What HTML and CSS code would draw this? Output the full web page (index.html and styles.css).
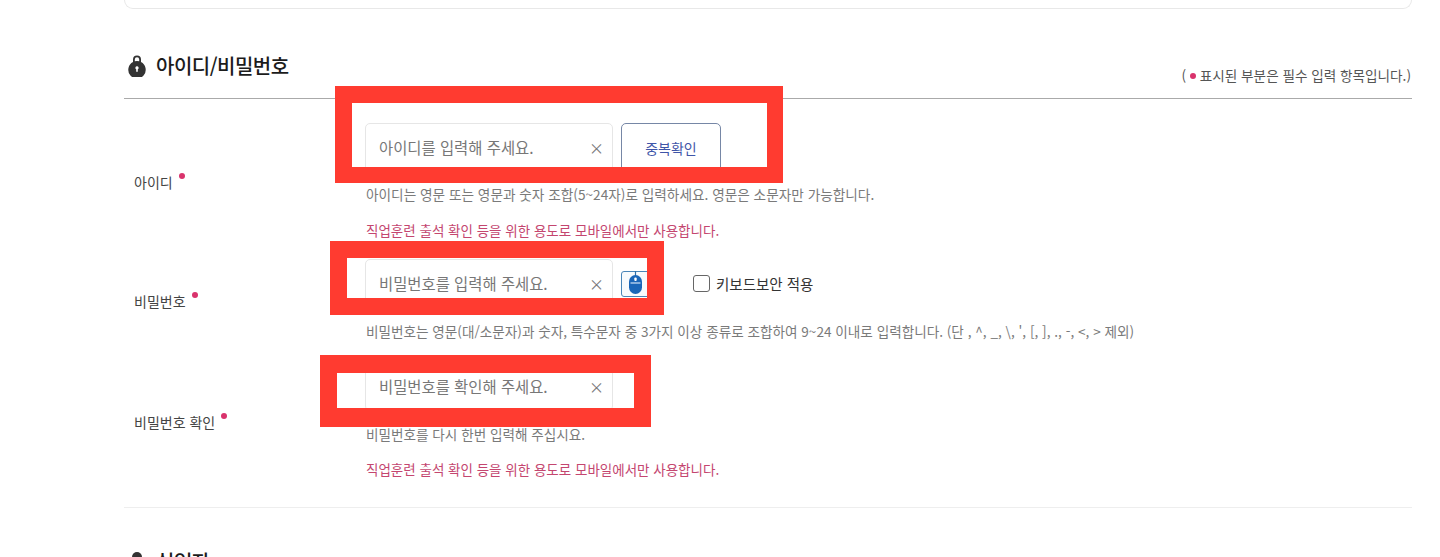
FILE: index.html
```html
<!DOCTYPE html>
<html lang="ko">
<head>
<meta charset="utf-8">
<title>아이디/비밀번호</title>
<link rel="stylesheet" href="styles.css">
</head>
<body>
<div class="page">
  <div class="top-card"></div>
  <section class="section">
    <header class="section-head">
      <h2 class="section-title">
        <svg class="lock" viewBox="0 0 18 22" aria-hidden="true"><path class="lock-body" fill-rule="evenodd" d="M5 7V4.4a4 4 0 0 1 8 0V7a8.7 8.7 0 1 1-8 0ZM6.8 6.2a8.7 8.7 0 0 1 4.4 0V4.4a2.2 2.2 0 0 0-4.4 0ZM9 11.2a1.6 1.6 0 0 0-.8 3v2.6h1.6v-2.6a1.6 1.6 0 0 0-.8-3Z"/></svg>
        아이디/비밀번호
      </h2>
      <p class="required-note">( <span class="note-dot"></span> 표시된 부분은 필수 입력 항목입니다.)</p>
    </header>

    <div class="form-row row-id">
      <div class="field-label">아이디<span class="req"></span></div>
      <div class="field-body">
        <div class="control-line">
          <div class="input-box"><input class="text-input" type="text" placeholder="아이디를 입력해 주세요."><span class="clear">×</span></div>
          <button class="check-btn" type="button">중복확인</button>
        </div>
        <p class="help">아이디는 영문 또는 영문과 숫자 조합(5~24자)로 입력하세요. 영문은 소문자만 가능합니다.</p>
        <p class="help warn">직업훈련 출석 확인 등을 위한 용도로 모바일에서만 사용합니다.</p>
      </div>
    </div>

    <div class="form-row row-pw">
      <div class="field-label">비밀번호<span class="req"></span></div>
      <div class="field-body">
        <div class="control-line">
          <div class="input-box"><input class="text-input" type="text" placeholder="비밀번호를 입력해 주세요."><span class="clear">×</span></div>
          <span class="mouse-btn">
            <svg viewBox="0 0 29 26" width="29" height="26" aria-hidden="true"><path d="M13.5 0v5" stroke="#2d6fa8" stroke-width="1.2" fill="none"/><rect x="7" y="4" width="13" height="19" rx="6.5" fill="#1a66b8"/><rect x="12.3" y="6.5" width="2.4" height="3.6" rx="1" fill="#fff"/><path d="M8.5 12h10" stroke="#cfe2f5" stroke-width="1.2"/></svg>
          </span>
          <label class="secure-check"><span class="check-box"></span>키보드보안 적용</label>
        </div>
        <p class="help help-loose">비밀번호는 영문(대/소문자)과 숫자, 특수문자 중 3가지 이상 종류로 조합하여 9~24 이내로 입력합니다. (단 , ^, _, \, ', [, ], ., -, &lt;, &gt; 제외)</p>
      </div>
    </div>

    <div class="form-row row-confirm">
      <div class="field-label">비밀번호 확인<span class="req"></span></div>
      <div class="field-body">
        <div class="control-line">
          <div class="input-box"><input class="text-input" type="text" placeholder="비밀번호를 확인해 주세요."><span class="clear">×</span></div>
        </div>
        <p class="help help-loose">비밀번호를 다시 한번 입력해 주십시요.</p>
        <p class="help warn">직업훈련 출석 확인 등을 위한 용도로 모바일에서만 사용합니다.</p>
      </div>
    </div>
  </section>

  <section class="section next-section">
    <h2 class="section-title">
      <svg class="lock" viewBox="0 0 18 22" aria-hidden="true"><circle class="lock-body" cx="9" cy="6" r="5"/><path class="lock-body" d="M0 22c0-6 4-9 9-9s9 3 9 9Z"/></svg>
      실업자
    </h2>
  </section>
</div>

<div class="redact redact-1"></div>
<div class="redact redact-2"></div>
<div class="redact redact-3"></div>
</body>
</html>
```
FILE: styles.css
```css
* { box-sizing: border-box; }
html, body { margin: 0; padding: 0; height: 557px; overflow: hidden; background: #fff; }
body {
  position: relative;
  font-family: "Noto Sans CJK KR", "Noto Sans", sans-serif;
  color: #333;
}
.page { margin: 0 28px 0 124px; }
.top-card {
  height: 9px;
  border: 1px solid #e8e8e8;
  border-top: 0;
  border-radius: 0 0 10px 10px;
}
.section-head {
  display: flex;
  justify-content: space-between;
  align-items: flex-end;
  height: 90px;
  padding-bottom: 13px;
  border-bottom: 1px solid #aaa;
}
.section-title {
  display: flex;
  align-items: center;
  gap: 10px;
  margin: 0 0 4px;
  padding-left: 4px;
  font-size: 20px;
  line-height: 30px;
  font-weight: 500;
  letter-spacing: -0.5px;
  color: #1c1c1c;
}
.lock { width: 18px; height: 22px; flex: none; }
.lock-body { fill: #333; }
.required-note {
  margin: 0;
  padding-right: 1px;
  font-size: 13.6px;
  line-height: 20px;
  color: #555;
}
.note-dot {
  display: inline-block;
  width: 6px;
  height: 6px;
  border-radius: 50%;
  background: #d9336c;
  vertical-align: 2px;
}
.form-row { display: flex; align-items: center; }
.row-id { padding: 24px 0 0; }
.row-pw { padding: 19px 0 0; }
.row-confirm { padding: 21px 0 28px; border-bottom: 1px solid #eee; }
.field-label {
  flex: none;
  width: 241px;
  padding: 2px 0 0 10px;
  font-size: 14px;
  line-height: 20px;
  color: #444;
}
.row-id .field-label { padding-top: 0; }
.req {
  display: inline-block;
  width: 6px;
  height: 6px;
  margin-left: 6px;
  border-radius: 50%;
  background: #d9336c;
  vertical-align: 9px;
}
.field-body { flex: 1; min-width: 0; }
.control-line { display: flex; align-items: center; height: 49px; }
.input-box {
  position: relative;
  display: flex;
  align-items: center;
  width: 248px;
  height: 49px;
  border: 1px solid #e6e6e6;
  border-radius: 5px;
}
.text-input {
  width: 210px;
  height: 100%;
  padding: 0 0 1px 13px;
  border: 0;
  outline: 0;
  background: transparent;
  font: inherit;
  font-size: 15.4px;
}
.text-input::placeholder { color: #777; opacity: 1; }
.clear {
  position: absolute;
  right: 8px;
  top: 50%;
  transform: translateY(-50%);
  font-size: 15px;
  line-height: 20px;
  color: #777;
}
.check-btn {
  width: 100px;
  height: 49px;
  margin-left: 8px;
  border: 1px solid #7687a6;
  border-radius: 5px;
  background: #fff;
  font: inherit;
  font-size: 14px;
  color: #3f55a8;
}
.mouse-btn {
  display: flex;
  width: 36px;
  height: 26px;
  margin-left: 8px;
  border: 1.5px solid #4a86b8;
  border-radius: 3px;
  background: #f8fbfd;
}
.mouse-btn svg { margin-top: -1px; }
.secure-check {
  display: flex;
  align-items: center;
  gap: 6px;
  margin-left: 36px;
  font-size: 14.5px;
  color: #333;
}
.check-box {
  width: 17px;
  height: 17px;
  border: 1.5px solid #666;
  border-radius: 3px;
  background: #fff;
}
.help {
  margin: 12px 0 0;
  font-size: 13.65px;
  line-height: 20px;
  color: #7a7a7a;
  padding-left: 1px;
}
.help-loose { margin-top: 13px; font-size: 13.6px; }
.help.warn { margin-top: 16px; font-size: 13.5px; color: #c4466f; }
.row-confirm .help.warn { margin-top: 15px; }
.next-section .section-title { margin: 39px 0 0; }
.redact {
  position: absolute;
  border-style: solid;
  border-color: #ff3b30;
  background: transparent;
}
.redact-1 { left: 335px; top: 86px; width: 448px; height: 97px; border-width: 17px 16px 16px 17px; }
.redact-2 { left: 330px; top: 241px; width: 334px; height: 74px; border-width: 17px 17px 17px 17px; }
.redact-3 { left: 320px; top: 355px; width: 331px; height: 72px; border-width: 18px 17px 19px 17px; }
```
